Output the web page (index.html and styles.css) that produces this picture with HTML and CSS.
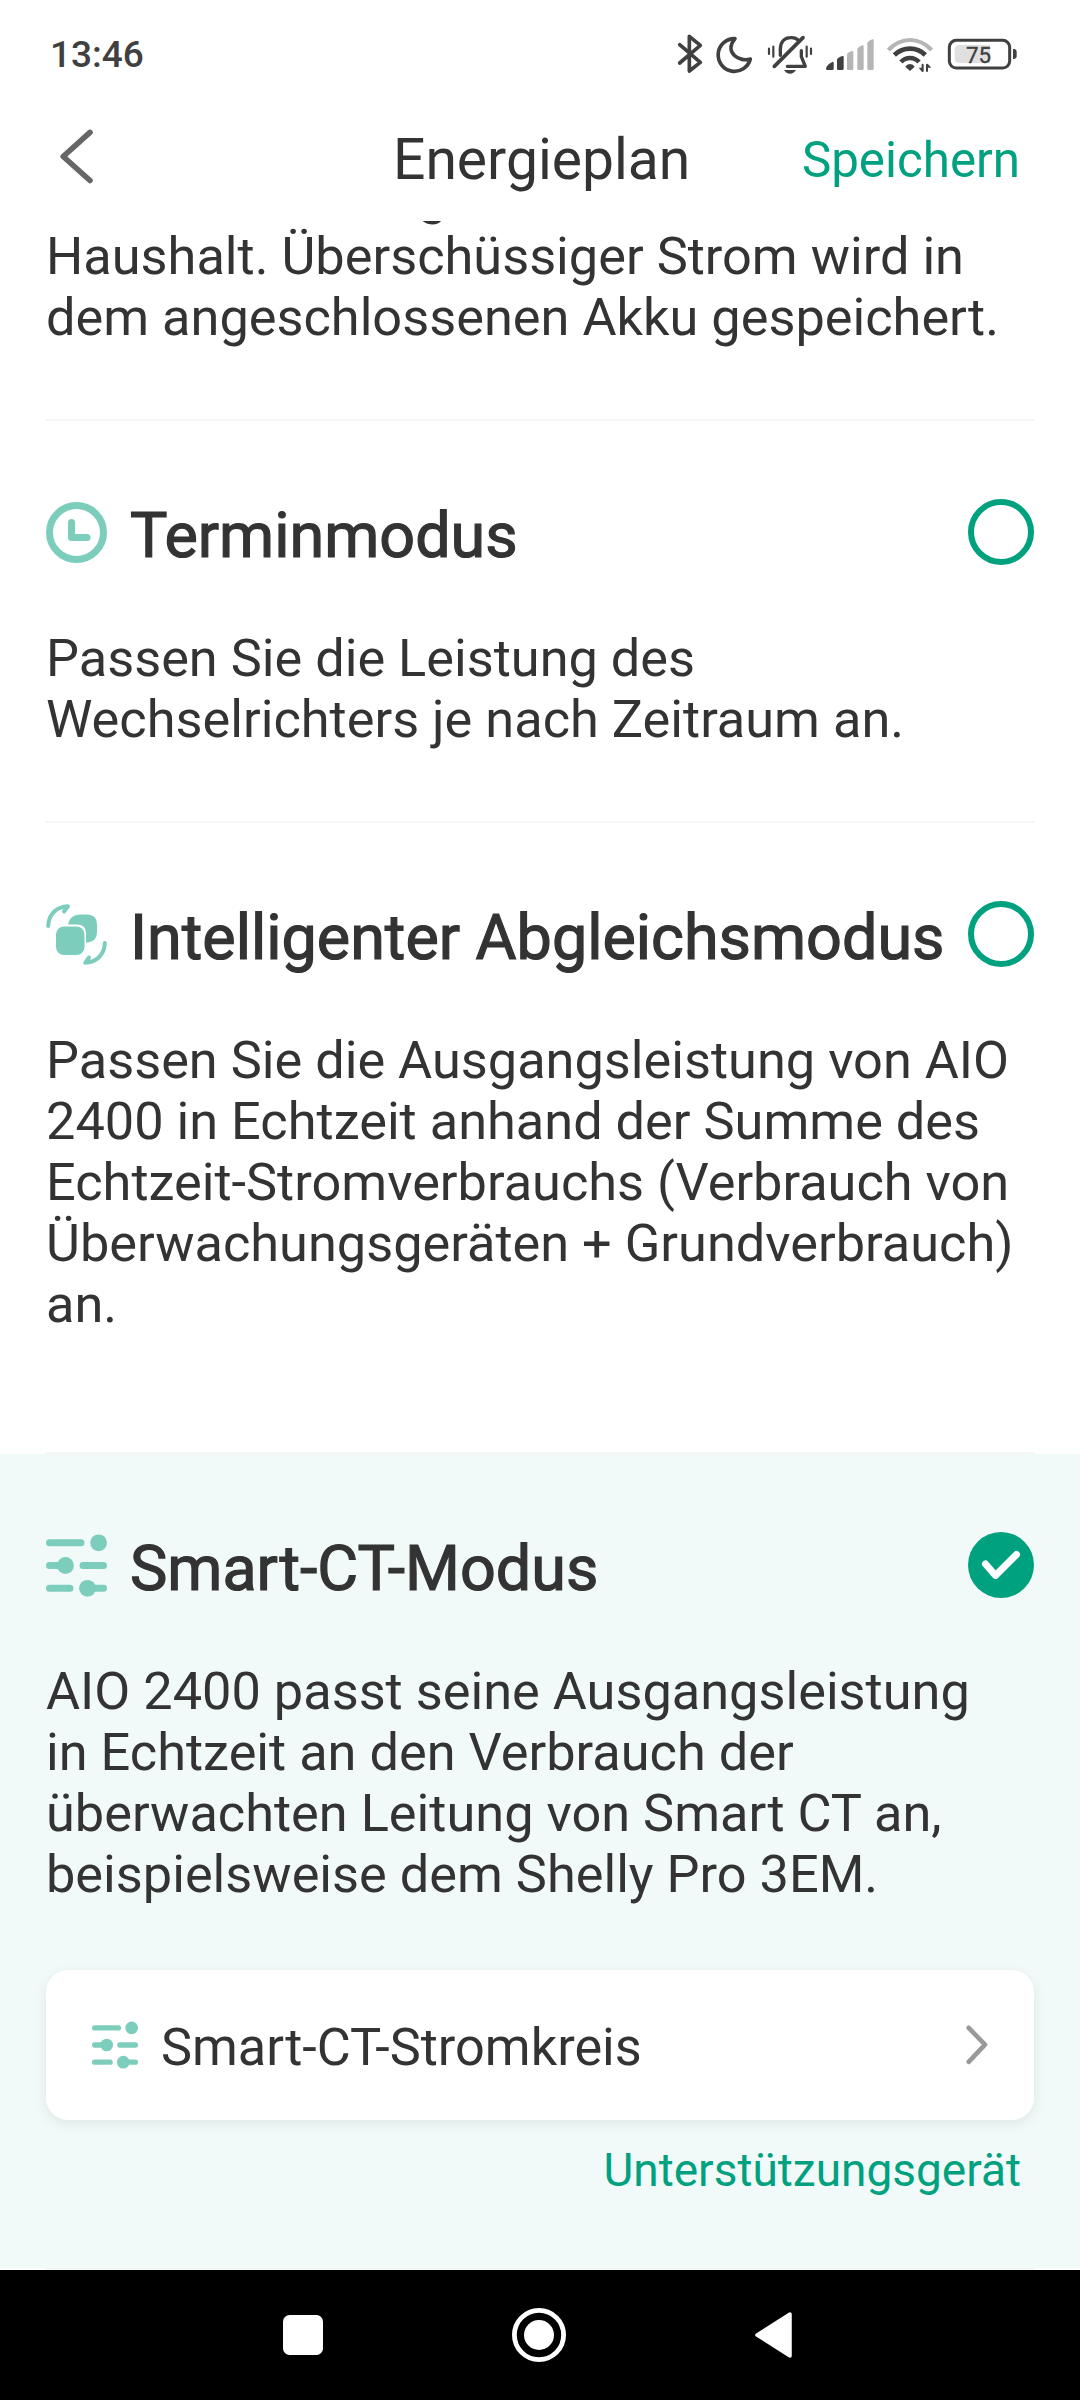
FILE: index.html
```html
<!DOCTYPE html>
<html lang="de">
<head>
<meta charset="utf-8">
<title>Energieplan</title>
<link rel="stylesheet" href="styles.css">
</head>
<body>
<svg class="defs" aria-hidden="true">
  <symbol id="sliders" viewBox="0 0 61 65">
    <g fill="none" stroke="currentColor" stroke-width="7" stroke-linecap="round">
      <path d="M3.5 9.800H35M3.500 32.500H15M37 32.500H57.500M3.500 55.300H24M45 55.300H57.500"/>
    </g>
    <g fill="currentColor">
      <circle cx="52.600" cy="9.800" r="8.400"/><circle cx="19.500" cy="32.500" r="8.400"/><circle cx="41.500" cy="55.300" r="8.400"/>
    </g>
  </symbol>
</svg>
<div class="screen">
  <div class="status">
    <span class="time">13:46</span>
    <svg class="status-icons" viewBox="0 0 1140 210" fill="none" stroke="#404040" stroke-linecap="round" stroke-linejoin="round">
      <path stroke-width="11" d="M59 74L121 127L88 153V49L121 76L59 129"/>
      <path stroke-width="11" d="M225 56A49 49 0 1 0 271 117C240 128 190 98 225 56Z"/>
      <g stroke-width="10">
        <path d="M361 106V88C361 66 373 54 391 53C400 52 408 55 413 59M424 92V110L436 139H382"/>
        <path stroke-width="11" d="M343 139L429 53"/>
        <path stroke-width="6.500" d="M327 86V102M340 80V110M440 80V110M453 86V102"/>
        <path stroke="none" fill="#404040" d="M372 150H408Q401 161 390 161T372 150Z"/>
      </g>
      <g stroke="none" fill="#404040">
        <path d="M498 146Q498 136 518 125Q521 125 521 129V146Q521 150 517 150H502Q498 150 498 146Z"/>
        <path d="M531 118Q533 113 547 108Q551 107 551 112V146Q551 150 547 150H535Q531 150 531 146Z"/>
        <g fill="#b5b5b5">
          <path d="M561 103Q562 98 576 93Q580 92 580 97V146Q580 150 576 150H565Q561 150 561 146Z"/>
          <path d="M592 88Q593 82 607 76Q611 75 611 80V146Q611 150 607 150H596Q592 150 592 146Z"/>
          <path d="M622 70Q623 64 637 58Q641 57 641 62V146Q641 150 637 150H626Q622 150 622 146Z"/>
        </g>
      </g>
      <g stroke-linecap="butt" stroke-width="14">
        <path stroke="#b5b5b5" stroke-width="12" d="M685 90Q714 60 750 60T815 90"/>
        <path d="M703 105Q723 86 750 86T796 105"/>
        <path d="M723 126Q734 114 750 114T777 126"/>
      </g>
      <path stroke="none" fill="#404040" d="M736 140Q740 132 750 132T764 140L750 153ZM776 143H786V155Z"/>
      <path stroke="none" fill="#404040" d="M803 131L814 143H803Z"/>
      <path stroke-width="6" d="M788 134V153M801 134V153"/>
      <rect x="868" y="61" width="181" height="83" rx="21" stroke-width="9"/>
      <path stroke="none" fill="#e0e0e0" d="M899 75H990V129H899Q884 129 884 114V90Q884 75 899 75Z"/>
      <path stroke="none" fill="#404040" d="M1059 87H1063Q1070 88 1070 95V109Q1070 116 1063 117H1059Z"/>
      <text class="battery-level" x="918" y="129">75</text>
    </svg>
  </div>
  <header class="header">
    <svg class="back" viewBox="0 0 34 56" fill="none" stroke="#666" stroke-width="5.600" stroke-linecap="round" stroke-linejoin="round"><path d="M31 3.400L4.200 27.500L31 51.500"/></svg>
    <h1 class="header-title">Energieplan</h1>
    <a class="save">Speichern</a>
  </header>
  <main class="list">
    <section class="mode mode-first">
      <p class="desc"><span class="indent">g</span><br>Haushalt. Überschüssiger Strom wird in<br>dem angeschlossenen Akku gespeichert.</p>
    </section>
    <div class="divider"></div>
    <section class="mode">
      <div class="row">
        <svg class="icon" viewBox="0 0 61 61" fill="none" stroke="currentColor" stroke-linecap="round" stroke-linejoin="round"><circle cx="30.500" cy="30.500" r="27" stroke-width="7"/><path stroke-width="7" d="M25.500 20.500V35.500H41"/></svg>
        <h2 class="title">Terminmodus</h2>
        <span class="radio"></span>
      </div>
      <p class="desc">Passen Sie die Leistung des<br>Wechselrichters je nach Zeitraum an.</p>
    </section>
    <div class="divider"></div>
    <section class="mode mode-smart">
      <div class="row">
        <svg class="icon" viewBox="0 0 61 61" fill="currentColor">
          <path d="M22 20.500Q24 10.500 34 10.500H41Q51 10.500 51 20.500V28Q51 37.500 42 38.500H40V29Q40 20.500 31 20.500Z"/>
          <rect x="10" y="22.500" width="28.500" height="28.500" rx="8"/>
          <g fill="none" stroke="currentColor" stroke-width="4" stroke-linecap="round" stroke-linejoin="round"><path d="M2.200 22C2.500 10 11 2.500 22 2.200L18 7.500M58.800 39C58.500 51 50 58.500 39.200 58.800L43 53.500"/></g>
        </svg>
        <h2 class="title">Intelligenter Abgleichsmodus</h2>
        <span class="radio"></span>
      </div>
      <p class="desc">Passen Sie die Ausgangsleistung von AIO<br>2400 in Echtzeit anhand der Summe des<br>Echtzeit-Stromverbrauchs (Verbrauch von<br>Überwachungsgeräten + Grundverbrauch)<br>an.</p>
    </section>
    <div class="divider"></div>
    <section class="mode mode-active">
      <div class="row">
        <svg class="icon icon-sliders"><use href="#sliders"/></svg>
        <h2 class="title">Smart-CT-Modus</h2>
        <svg class="check" viewBox="0 0 66 66"><circle cx="33" cy="33" r="33" fill="#00a17f"/><path d="M17.500 32L27.500 43.500L48.500 22.500" fill="none" stroke="#fff" stroke-width="7" stroke-linecap="round" stroke-linejoin="round"/></svg>
      </div>
      <p class="desc">AIO 2400 passt seine Ausgangsleistung<br>in Echtzeit an den Verbrauch der<br>überwachten Leitung von Smart CT an,<br>beispielsweise dem Shelly Pro 3EM.</p>
      <div class="card">
        <svg class="card-icon"><use href="#sliders"/></svg>
        <span class="card-label">Smart-CT-Stromkreis</span>
        <svg class="chevron" viewBox="0 0 22 40" fill="none" stroke="#999" stroke-width="4.600" stroke-linecap="round" stroke-linejoin="round"><path d="M2.700 2.800L19 19.700L2.700 36.800"/></svg>
      </div>
      <a class="link">Unterstützungsgerät</a>
    </section>
    <div class="divider"></div>
  </main>
  <nav class="nav">
    <svg class="nav-recent" viewBox="0 0 40 40"><rect width="40" height="40" rx="6.500" fill="#fff"/></svg>
    <svg class="nav-home" viewBox="0 0 54 54"><circle cx="27" cy="27" r="24.600" fill="none" stroke="#fff" stroke-width="4.800"/><circle cx="27" cy="27" r="15" fill="#fff"/></svg>
    <svg class="nav-back" viewBox="0 0 37 46"><path d="M2 23L35 2V44Z" fill="#fff" stroke="#fff" stroke-width="3.500" stroke-linejoin="round"/></svg>
  </nav>
</div>
</body>
</html>
```
FILE: styles.css
```css
* { box-sizing: border-box; margin: 0; padding: 0; }
body { background: #fff; color: #333; font-family: Roboto, "Noto Sans", sans-serif; }
svg { display: block; flex: none; }
.defs { width: 0; height: 0; display: none; }
.screen { width: 1080px; height: 2400px; display: flex; flex-direction: column; overflow: hidden; }

.status { height: 100px; padding: 20px 40px 0 50px; display: flex; justify-content: space-between; align-items: flex-start; }
.time { margin-top: 13px; font-size: 37px; line-height: 44px; font-weight: 500; color: #404040; }
.status-icons { width: 380px; height: 70px; }
.battery-level { font-size: 67px; font-weight: 400; fill: #404040; stroke: #404040; stroke-width: 1px; }

.header { height: 121px; padding: 0 60px 0 59px; display: flex; align-items: flex-start; }
.back { width: 34px; height: 56px; margin-top: 29px; }
.header-title { margin: 26px 0 0 300px; font-size: 57px; line-height: 68px; font-weight: 400; }
.save { margin: 31px 0 0 auto; font-size: 49.300px; line-height: 58px; color: #00a17f; }

.list { flex: 1; overflow: hidden; }
.divider { height: 2px; margin: 0 46px; background: #f5f6f6; }
.mode { padding: 78px 46px 71px; }
.mode-first { padding-top: 0; margin-top: -56px; }
.mode-smart { padding-bottom: 117px; }
.mode-active { background: #f1faf9; }
.row { height: 66px; display: flex; align-items: center; margin-bottom: 63px; }
.icon { width: 61px; height: 61px; color: #7dcdbc; }
.icon-sliders { height: 65px; }
.title { flex: 1; margin: 7px 0 0 23px; font-size: 62.850px; line-height: 74px; font-weight: 400; white-space: nowrap; -webkit-text-stroke: 1.200px #333; }
.radio { width: 66px; height: 66px; flex: none; border: 6px solid #00a17f; border-radius: 50%; }
.check { width: 66px; height: 66px; }
.desc { font-size: 52.300px; line-height: 61px; white-space: nowrap; }
.indent { margin-left: 372px; }

.card { height: 150px; margin-top: 65px; padding: 0 46px; display: flex; align-items: center; background: #fff; border-radius: 22px; box-shadow: 0 4px 14px rgba(0, 0, 0, .08); }
.card-icon { width: 46px; height: 50px; color: #7dcdbc; }
.card-label { flex: 1; margin: 5px 0 0 23px; font-size: 52.250px; line-height: 61px; }
.chevron { width: 22px; height: 40px; }
.link { display: block; margin-top: 23px; padding-right: 13px; text-align: right; font-size: 46px; line-height: 54px; color: #00a17f; }

.nav { height: 130px; background: #000; display: grid; grid-template-columns: 283px 229px 243px auto; align-items: center; }
.nav-recent { width: 40px; height: 40px; grid-column: 2; }
.nav-home { width: 54px; height: 54px; grid-column: 3; }
.nav-back { width: 37px; height: 46px; grid-column: 4; }
```
